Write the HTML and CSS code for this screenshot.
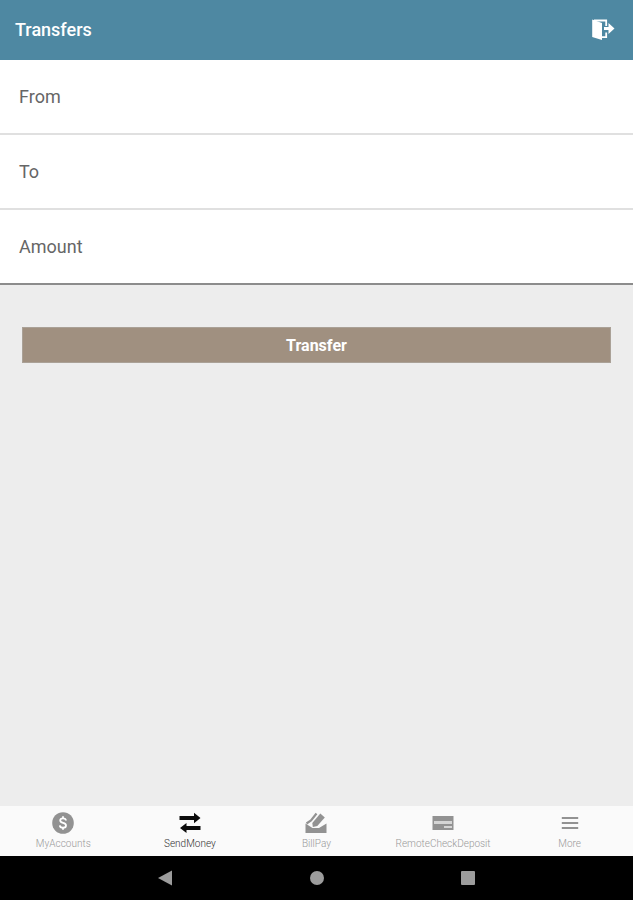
FILE: index.html
```html
<!DOCTYPE html>
<html lang="en">
<head>
<meta charset="utf-8">
<meta name="viewport" content="width=device-width, initial-scale=1">
<title>Transfers</title>
<link rel="stylesheet" href="styles.css">
</head>
<body>
<header class="app-bar">
  <h1 class="app-title">Transfers</h1>
  <button class="logout" type="button" aria-label="Log out">
    <svg width="24" height="24" viewBox="0 0 24 24" aria-hidden="true">
      <path fill="none" stroke="#fff" stroke-width="1.800" d="M3 2.500h12.200V8M15.200 14.500v4.700H10"/>
      <path fill="#fff" d="M1.200 1.600 11 5v17l-9.800-3z"/>
      <path fill="#fff" d="M13 9h4.500V5l6 5.500-6 5.500v-4H13z"/>
    </svg>
  </button>
</header>
<main class="content">
  <form class="transfer-form">
    <div class="fields">
      <button class="field" type="button">From</button>
      <button class="field" type="button">To</button>
      <label class="field"><span>Amount</span><input class="amount" type="text" inputmode="decimal"></label>
    </div>
    <button class="submit" type="submit">Transfer</button>
  </form>
</main>
<nav class="tabs">
  <a class="tab" href="#accounts">
    <svg width="24" height="24" viewBox="0 0 24 24" aria-hidden="true">
      <circle cx="12" cy="12" r="10.800" fill="#929292"/>
      <path fill="none" stroke="#fff" stroke-width="1.800" d="M15 9.500C14.800 8 13.700 7.300 12 7.300S9.200 8.100 9.200 9.500c0 3.200 5.800 1.600 5.800 4.900 0 1.500-1.200 2.300-3 2.300s-3-.8-3.200-2.400M12 5.300v2M12 16.700v2"/>
    </svg>
    <span>MyAccounts</span>
  </a>
  <a class="tab tab-active" href="#send" aria-current="page">
    <svg width="24" height="24" viewBox="0 0 24 24" aria-hidden="true">
      <path fill="#0c0c0c" d="M1.500 5h14.500V1.800l6.500 5.200-6.500 5.200V9H1.500zM22.500 19H8.500v3L2 17l6.500-5v3h14z"/>
    </svg>
    <span>SendMoney</span>
  </a>
  <a class="tab" href="#bills">
    <svg width="24" height="24" viewBox="0 0 24 24" aria-hidden="true">
      <path fill="#929292" d="M1.500 12.500 8.500 17h6.500l7.500-4.500V22h-21z"/>
      <path fill="#929292" d="m8.300 12 8-9.500 4.500 4-7.500 8.500-4.500 1z"/>
      <path fill="none" stroke="#929292" stroke-width="2.200" d="m2.500 12.500 4.500-3 5.500-7"/>
    </svg>
    <span>BillPay</span>
  </a>
  <a class="tab" href="#deposit">
    <svg width="24" height="24" viewBox="0 0 24 24" aria-hidden="true">
      <path fill="#929292" d="M1.500 5h21v14h-21z"/>
      <path fill="#d5d5d5" d="M3 10h18v3H3z"/>
      <path fill="#d5d5d5" d="M13 15h8v2h-8z"/>
    </svg>
    <span>RemoteCheckDeposit</span>
  </a>
  <a class="tab" href="#more">
    <svg width="24" height="24" viewBox="0 0 24 24" aria-hidden="true">
      <path fill="none" stroke="#929292" stroke-width="1.800" d="M3.800 7h16.400M3.800 12h16.400M3.800 17h16.400"/>
    </svg>
    <span>More</span>
  </a>
</nav>
<div class="system-bar">
  <button class="system-key" type="button" aria-label="Back">
    <svg width="16" height="16" viewBox="0 0 16 16" aria-hidden="true"><path fill="#9c9c9c" d="M1 8 15 .5v15z"/></svg>
  </button>
  <button class="system-key" type="button" aria-label="Home">
    <svg width="16" height="16" viewBox="0 0 16 16" aria-hidden="true"><circle cx="8" cy="8" r="7" fill="#9c9c9c"/></svg>
  </button>
  <button class="system-key" type="button" aria-label="Recent apps">
    <svg width="16" height="16" viewBox="0 0 16 16" aria-hidden="true"><rect x="1" y="1" width="14" height="14" rx="1" fill="#9c9c9c"/></svg>
  </button>
</div>
</body>
</html>
```
FILE: styles.css
```css
* {
  box-sizing: border-box;
}

body {
  margin: 0;
  min-height: 100vh;
  display: flex;
  flex-direction: column;
  background: #ededed;
  font-family: Roboto, "Liberation Sans", sans-serif;
}

button {
  border: 0;
  padding: 0;
  background: none;
  font: inherit;
  cursor: pointer;
}

svg {
  display: block;
}

.app-bar {
  display: flex;
  align-items: center;
  justify-content: space-between;
  height: 60px;
  padding: 0 18px 0 15px;
  background: #4e88a2;
}

.app-title {
  margin: 0;
  color: #fff;
  font-size: 18px;
  font-weight: 500;
  line-height: 24px;
}

.content {
  flex: 1;
}

.fields {
  border-bottom: 2px solid #8c8c8c;
}

.field {
  display: flex;
  align-items: center;
  width: 100%;
  height: 75px;
  padding: 0 19px;
  border-bottom: 2px solid #e0e0e0;
  background: #fff;
  color: #666;
  font-size: 18px;
  line-height: 24px;
}

.field:last-child {
  height: 73px;
  border-bottom: 0;
}

.amount {
  flex: 1;
  min-width: 0;
  margin-left: 16px;
  border: 0;
  outline: 0;
  background: none;
  color: inherit;
  font: inherit;
}

.submit {
  display: block;
  width: calc(100% - 44px);
  height: 36px;
  margin: 42px 22px 0;
  border: 1px solid #aaa197;
  background: #a09080;
  color: #fff;
  font-size: 16px;
  font-weight: 700;
}

.tabs {
  display: grid;
  grid-template-columns: repeat(5, 1fr);
  height: 50px;
  background: #fafafa;
}

.tab {
  display: flex;
  flex-direction: column;
  align-items: center;
  min-width: 0;
  padding-top: 5px;
  color: #999;
  font-size: 10px;
  font-weight: 300;
  line-height: 18px;
  text-decoration: none;
}

.tab-active {
  color: #303030;
}

.system-bar {
  display: grid;
  grid-template-columns: repeat(3, 24%);
  justify-content: center;
  height: 44px;
  background: #000;
}

.system-key {
  display: flex;
  align-items: center;
  justify-content: center;
}
```
